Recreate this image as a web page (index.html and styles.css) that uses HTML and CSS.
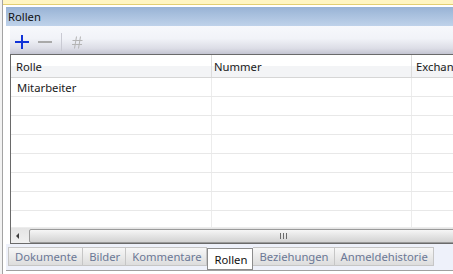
FILE: index.html
```html
<!DOCTYPE html>
<html lang="de">
<head>
    <meta charset="UTF-8">
    <title>Rollen</title>
    <link rel="stylesheet" href="styles.css">
</head>
<body>
    <div class="window">
        <div class="notice"></div>
        <div class="panel">
            <div class="panel-title">Rollen</div>
            <div class="panel-body">
                <div class="toolbar">
                    <span class="tool">
                        <svg width="14" height="14" viewBox="0 0 14 14">
                            <path d="M0 7H14M7 0V14" stroke="#1033d8" stroke-width="2"/>
                        </svg>
                    </span>
                    <span class="tool">
                        <svg width="14" height="14" viewBox="0 0 14 14">
                            <path d="M0 7H14" stroke="#a9a9a9" stroke-width="2"/>
                        </svg>
                    </span>
                    <span class="sep"></span>
                    <span class="tool">
                        <svg width="11" height="13" viewBox="0 0 11 13">
                            <path d="M4.5 0.5L2.5 12.5M8.5 0.5L6.5 12.5M0.5 4.5H10.5M0 8.5H10" stroke="#b4b4b4" stroke-width="1"/>
                        </svg>
                    </span>
                </div>
                <div class="grid">
                    <div class="grid-head">
                        <div class="col col-1">Rolle</div>
                        <div class="col col-2">Nummer</div>
                        <div class="col col-3">Exchange</div>
                    </div>
                    <div class="grid-rows">
                        <div class="row"><div class="col col-1">Mitarbeiter</div><div class="col col-2"></div><div class="col col-3"></div></div>
                        <div class="row"><div class="col col-1"></div><div class="col col-2"></div><div class="col col-3"></div></div>
                        <div class="row"><div class="col col-1"></div><div class="col col-2"></div><div class="col col-3"></div></div>
                        <div class="row"><div class="col col-1"></div><div class="col col-2"></div><div class="col col-3"></div></div>
                        <div class="row"><div class="col col-1"></div><div class="col col-2"></div><div class="col col-3"></div></div>
                        <div class="row"><div class="col col-1"></div><div class="col col-2"></div><div class="col col-3"></div></div>
                        <div class="row"><div class="col col-1"></div><div class="col col-2"></div><div class="col col-3"></div></div>
                        <div class="row"><div class="col col-1"></div><div class="col col-2"></div><div class="col col-3"></div></div>
                    </div>
                    <div class="hscroll">
                        <span class="arrow"></span>
                        <div class="thumb"><span class="grip"></span></div>
                    </div>
                </div>
            </div>
            <div class="tabs">
                <span class="tab">Dokumente</span>
                <span class="tab">Bilder</span>
                <span class="tab">Kommentare</span>
                <span class="tab active">Rollen</span>
                <span class="tab">Beziehungen</span>
                <span class="tab">Anmeldehistorie</span>
            </div>
        </div>
    </div>
</body>
</html>
```

FILE: styles.css
```css
body {
    margin: 0;
    width: 453px;
    height: 274px;
    overflow: hidden;
    background-color: #f2f2f2;
    font-family: "Noto Sans", "Liberation Sans", sans-serif;
    font-size: 11.25px;
    color: #1a1a1a;
}

.window {
    margin-left: 2px;
    width: 700px;
    height: 274px;
    border-left: 1px solid #a3a3a3;
    background-color: #fff;
}

.notice {
    height: 4px;
    background-color: #fff5c2;
    border-bottom: 1px solid #e3cf72;
    margin-bottom: 2px;
}

.panel {
    margin-left: 3px;
}

.panel-title {
    height: 18px;
    line-height: 18px;
    padding: 1px 0 0 2px;
    background: linear-gradient(#98b3d5, #bfd2ea);
    color: #111;
}

.panel-body {
    padding-left: 4px;
}

.toolbar {
    height: 24px;
    display: flex;
    align-items: center;
    padding: 4px 0 0 5px;
    background: linear-gradient(#f7f8fc 0%, #f1f3f8 45%, #dcdde6 80%, #c4c5d2 100%);
    border-bottom: 1px solid #6a6a6a;
}

.tool {
    display: flex;
    align-items: center;
    justify-content: center;
    width: 14px;
    margin-right: 9px;
}

.sep {
    width: 1px;
    height: 18px;
    background-color: #c9cad3;
    margin: 0 8px 0 0;
}

.grid {
    border-left: 1px solid #6a6a6a;
    border-bottom: 1px solid #6a6a6a;
}

.grid-head {
    display: flex;
    height: 22px;
    background: linear-gradient(#fff 0%, #fff 50%, #f3f4f6 50%, #f3f4f6 100%);
    border-bottom: 1px solid #d6d6d6;
}

.col {
    flex: none;
    box-sizing: border-box;
    padding-left: 6px;
    border-right: 1px solid #e4e4e4;
    white-space: nowrap;
    overflow: hidden;
}

.grid-head .col {
    height: 22px;
    line-height: 21px;
    padding-top: 1px;
    padding-left: 5px;
    border-right-color: #dcdcdc;
}

.col-1 {
    width: 201px;
}

.col-2 {
    width: 200px;
}

.col-3 {
    width: 200px;
}

.grid-head .col-2 {
    padding-left: 2px;
}

.grid-head .col-3 {
    padding-left: 4px;
}

.grid-rows {
    height: 149px;
    overflow: hidden;
}

.row {
    display: flex;
    height: 18px;
    border-bottom: 1px solid #e8e8e8;
}

.row .col {
    height: 18px;
    line-height: 17px;
    padding-top: 1px;
    border-right-color: #ececec;
}

.hscroll {
    position: relative;
    height: 15px;
    background: linear-gradient(#e4e4e4, #f0f0f0);
    border-top: 1px solid #ececec;
    display: flex;
    align-items: center;
}

.arrow {
    width: 0;
    height: 0;
    margin-left: 5px;
    border-top: 3px solid transparent;
    border-bottom: 3px solid transparent;
    border-right: 3px solid #3c3c3c;
}

.thumb {
    position: absolute;
    left: 18px;
    top: 1px;
    width: 506px;
    height: 12px;
    border: 1px solid #9a9a9a;
    border-radius: 2px;
    background: linear-gradient(#f6f6f6, #e2e2e2 55%, #d3d3d3);
}

.grip {
    position: absolute;
    left: 250px;
    top: 3px;
    width: 1px;
    height: 6px;
    background-color: #6a6a6a;
    box-shadow: 3px 0 0 #6a6a6a, 6px 0 0 #6a6a6a;
}

.tabs {
    display: flex;
    align-items: flex-start;
    height: 23px;
    padding: 3px 0 0 2px;
    background-color: #eef1fa;
    border-bottom: 1px solid #a0a0a0;
}

.tab {
    height: 17px;
    line-height: 17px;
    padding: 0 5px 0 6px;
    border: 1px solid #c6c6c6;
    border-left: none;
    background: linear-gradient(#f7f7f7, #dddddd);
    color: #6b7896;
}

.tab:first-child {
    border-left: 1px solid #c6c6c6;
}

.tab.active {
    height: 19px;
    line-height: 20px;
    padding-top: 1px;
    margin-top: 1px;
    border: 1px solid #8c8c8c;
    background: #fff;
    color: #111;
}
```
